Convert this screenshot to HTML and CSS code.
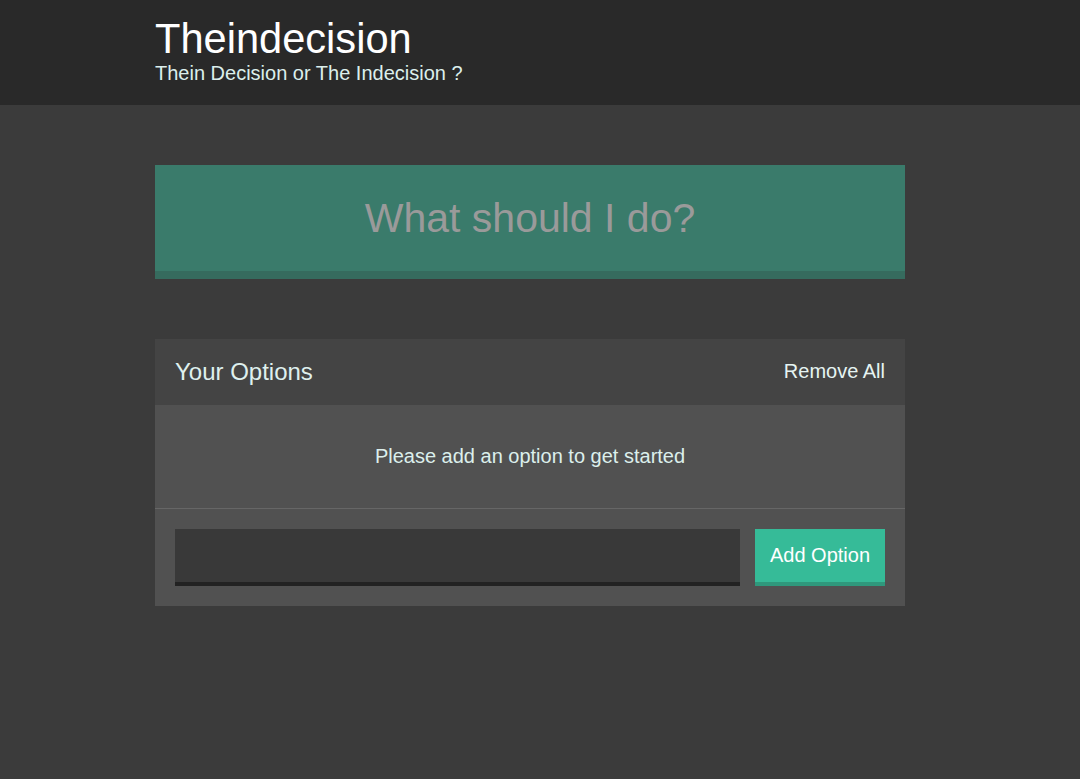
FILE: index.html
```html
<!DOCTYPE html>
<html lang="en">
<head>
<meta charset="utf-8">
<title>Theindecision</title>
<link rel="stylesheet" href="styles.css">
</head>
<body>
<header class="header">
  <div class="container">
    <h1 class="header__title">Theindecision</h1>
    <h2 class="header__subtitle">Thein Decision or The Indecision ?</h2>
  </div>
</header>
<main class="container main">
  <button class="big-button" disabled>What should I do?</button>
  <section class="widget">
    <div class="widget-header">
      <h3 class="widget-header__title">Your Options</h3>
      <button class="button--link">Remove All</button>
    </div>
    <p class="widget__message">Please add an option to get started</p>
    <form class="add-option">
      <input class="add-option__input" type="text" name="option">
      <button class="button" type="button">Add Option</button>
    </form>
  </section>
</main>
</body>
</html>
```
FILE: styles.css
```css
* { box-sizing: border-box; }
html, body { margin: 0; padding: 0; }
body {
  background: #3b3b3b;
  font-family: "Liberation Sans", Arial, Helvetica, sans-serif;
  color: #dff0ee;
  min-height: 779px;
  padding-right: 20px;
}
.container {
  width: 750px;
  margin: 0 auto;
}
.header {
  background: #292929;
  height: 105px;
  padding-top: 17px;
  margin-right: -20px;
  padding-right: 20px;
}
.header__title {
  margin: 0;
  font-size: 41.6px;
  font-weight: normal;
  line-height: 44px;
  color: #ffffff;
}
.header__subtitle {
  margin: 0;
  font-size: 20px;
  font-weight: normal;
  line-height: 24px;
  color: #dcefec;
}
.main {
  padding-top: 60px;
  display: flex;
  flex-direction: column;
}
.big-button {
  display: block;
  width: 100%;
  height: 114px;
  background: #3a7b6b;
  border: none;
  border-bottom: 8px solid #366b5e;
  color: #9a9a9a;
  font-family: inherit;
  font-size: 41px;
  padding: 0;
  margin: 0 0 60px;
}
.widget {
  background: #515151;
}
.widget-header {
  background: #444444;
  height: 66px;
  padding: 0 20px;
  display: flex;
  justify-content: space-between;
  align-items: center;
}
.widget-header__title {
  margin: 0;
  font-size: 24px;
  font-weight: normal;
  color: #dff0ee;
}
.button--link {
  background: none;
  border: none;
  padding: 0;
  font-family: inherit;
  font-size: 20px;
  color: #e6f4f2;
  margin-top: -2px;
}
.widget__message {
  margin: 0;
  height: 104px;
  border-bottom: 1px solid #666666;
  display: flex;
  align-items: center;
  justify-content: center;
  font-size: 20px;
  color: #dcefec;
}
.add-option {
  display: flex;
  gap: 15px;
  padding: 20px 20px 20px;
}
.add-option__input {
  flex: 1;
  height: 57px;
  background: #393939;
  border: none;
  border-bottom: 4px solid #222222;
  color: #ffffff;
  font-family: inherit;
  font-size: 20px;
  padding: 0 12px;
  outline: none;
}
.button {
  width: 130px;
  height: 57px;
  background: #36bb98;
  border: none;
  border-bottom: 4px solid #2f987c;
  color: #ffffff;
  font-family: inherit;
  font-size: 20px;
  padding: 0;
}
```
